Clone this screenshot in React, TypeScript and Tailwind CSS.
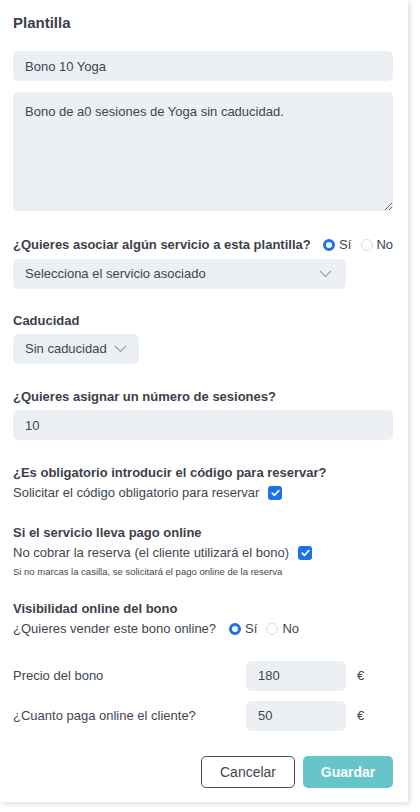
import React from 'react';

const font = { fontFamily: '"Liberation Sans", Arial, sans-serif' };

function Chevron({ className }: { className?: string }) {
  return (
    <svg className={className} width="13" height="8" viewBox="0 0 13 8" fill="none">
      <path d="M1 1l5.5 5.5L12 1" stroke="#9aa1ab" strokeWidth="1.1" />
    </svg>
  );
}

function Radio({ checked }: { checked?: boolean }) {
  return checked ? (
    <span className="inline-block w-[12px] h-[12px] rounded-full border-[3.5px] border-[#1a73e8] bg-white" />
  ) : (
    <span className="inline-block w-[12px] h-[12px] rounded-full border border-[#d9dce1] bg-white" />
  );
}

function Check() {
  return (
    <span className="inline-flex items-center justify-center w-[14px] h-[14px] rounded-[3px] bg-[#1a73e8]">
      <svg width="9" height="8" viewBox="0 0 9 8" fill="none">
        <path d="M1.3 4.2l2.2 2.1L7.8 1.6" stroke="white" strokeWidth="1.7" strokeLinecap="round" strokeLinejoin="round" />
      </svg>
    </span>
  );
}

function Label({ children, className = '' }: { children: React.ReactNode; className?: string }) {
  return <div className={`text-[13px] leading-[20px] font-bold text-[#3b414c] ${className}`}>{children}</div>;
}

export default function App() {
  return (
    <div className="min-h-[812px] bg-white" style={font}>
      <div className="w-[408px] bg-white shadow-[2px_2px_5px_rgba(0,0,0,0.13)] pl-[13px] pr-[15px] pt-[13px] pb-[14px] text-[#40464f]">
        {/* cabecera */}
        <h2 className="text-[15px] leading-[20px] font-bold text-[#3b414c]">Plantilla</h2>

        <input
          readOnly
          defaultValue="Bono 10 Yoga"
          className="mt-[18px] block w-full h-[30px] rounded-[5px] bg-[#eceff3] px-[12px] text-[13px] text-[#40464f] outline-none"
        />
        <textarea
          readOnly
          defaultValue="Bono de a0 sesiones de Yoga sin caducidad."
          className="mt-[11px] block w-full h-[119px] rounded-[5px] bg-[#eceff3] px-[12px] pt-[11px] text-[13px] leading-[18px] text-[#40464f] outline-none"
        />

        {/* servicio asociado */}
        <div className="mt-[24px] flex items-center">
          <Label>¿Quieres asociar algún servicio a esta plantilla?</Label>
          <div className="ml-auto flex items-center text-[13px] leading-[20px]">
            <Radio checked />
            <span className="ml-[4px]">Sí</span>
            <span className="ml-[10px] flex"><Radio /></span>
            <span className="ml-[3px]">No</span>
          </div>
        </div>
        <div className="mt-[4px] w-[333px] h-[30px] rounded-[5px] bg-[#eceff3] flex items-center pl-[12px] pr-[14px] text-[13px]">
          <span>Selecciona el servicio asociado</span>
          <Chevron className="ml-auto" />
        </div>

        <Label className="mt-[22px]">Caducidad</Label>
        <div className="mt-[3px] w-[126px] h-[30px] rounded-[5px] bg-[#eceff3] flex items-center pl-[12px] text-[13px]">
          <span>Sin caducidad</span>
          <Chevron className="ml-[7px]" />
        </div>

        <Label className="mt-[23px]">¿Quieres asignar un número de sesiones?</Label>
        <input
          readOnly
          defaultValue="10"
          className="mt-[3px] block w-full h-[30px] rounded-[5px] bg-[#eceff3] px-[12px] text-[13px] text-[#40464f] outline-none"
        />

        {/* opciones de reserva */}
        <Label className="mt-[23px]">¿Es obligatorio introducir el código para reservar?</Label>
        <div className="flex items-center text-[13px] leading-[20px]">
          <span>Solicitar el código obligatorio para reservar</span>
          <span className="ml-[9px] flex"><Check /></span>
        </div>

        <Label className="mt-[20px]">Si el servicio lleva pago online</Label>
        <div className="flex items-center text-[13px] leading-[20px]">
          <span>No cobrar la reserva (el cliente utilizará el bono)</span>
          <span className="ml-[9px] flex"><Check /></span>
        </div>
        <div className="text-[9.5px] leading-[14px] mt-[2px]">Si no marcas la casilla, se solicitará el pago online de la reserva</div>

        <Label className="mt-[20px]">Visibilidad online del bono</Label>
        <div className="flex items-center text-[13px] leading-[20px]">
          <span>¿Quieres vender este bono online?</span>
          <span className="ml-[13px] flex"><Radio checked /></span>
          <span className="ml-[4px]">Sí</span>
          <span className="ml-[9px] flex"><Radio /></span>
          <span className="ml-[4px]">No</span>
        </div>

        {/* precios */}
        <div className="mt-[22px] flex items-center text-[13px]">
          <span className="w-[233px]">Precio del bono</span>
          <div className="w-[100px] h-[30px] rounded-[5px] bg-[#eceff3] flex items-center pl-[12px]">180</div>
          <span className="ml-[11px]">€</span>
        </div>
        <div className="mt-[10px] flex items-center text-[13px]">
          <span className="w-[233px]">¿Cuanto paga online el cliente?</span>
          <div className="w-[100px] h-[30px] rounded-[5px] bg-[#eceff3] flex items-center pl-[12px]">50</div>
          <span className="ml-[11px]">€</span>
        </div>

        <div className="mt-[25px] flex justify-end gap-[8px]">
          <button className="w-[94px] h-[32px] rounded-[5px] border border-[#4a4f57] bg-white text-[14px] text-[#40464f]">
            Cancelar
          </button>
          <button className="w-[90px] h-[32px] rounded-[5px] bg-[#66c5cb] text-[14px] font-semibold text-white">
            Guardar
          </button>
        </div>
      </div>
    </div>
  );
}
